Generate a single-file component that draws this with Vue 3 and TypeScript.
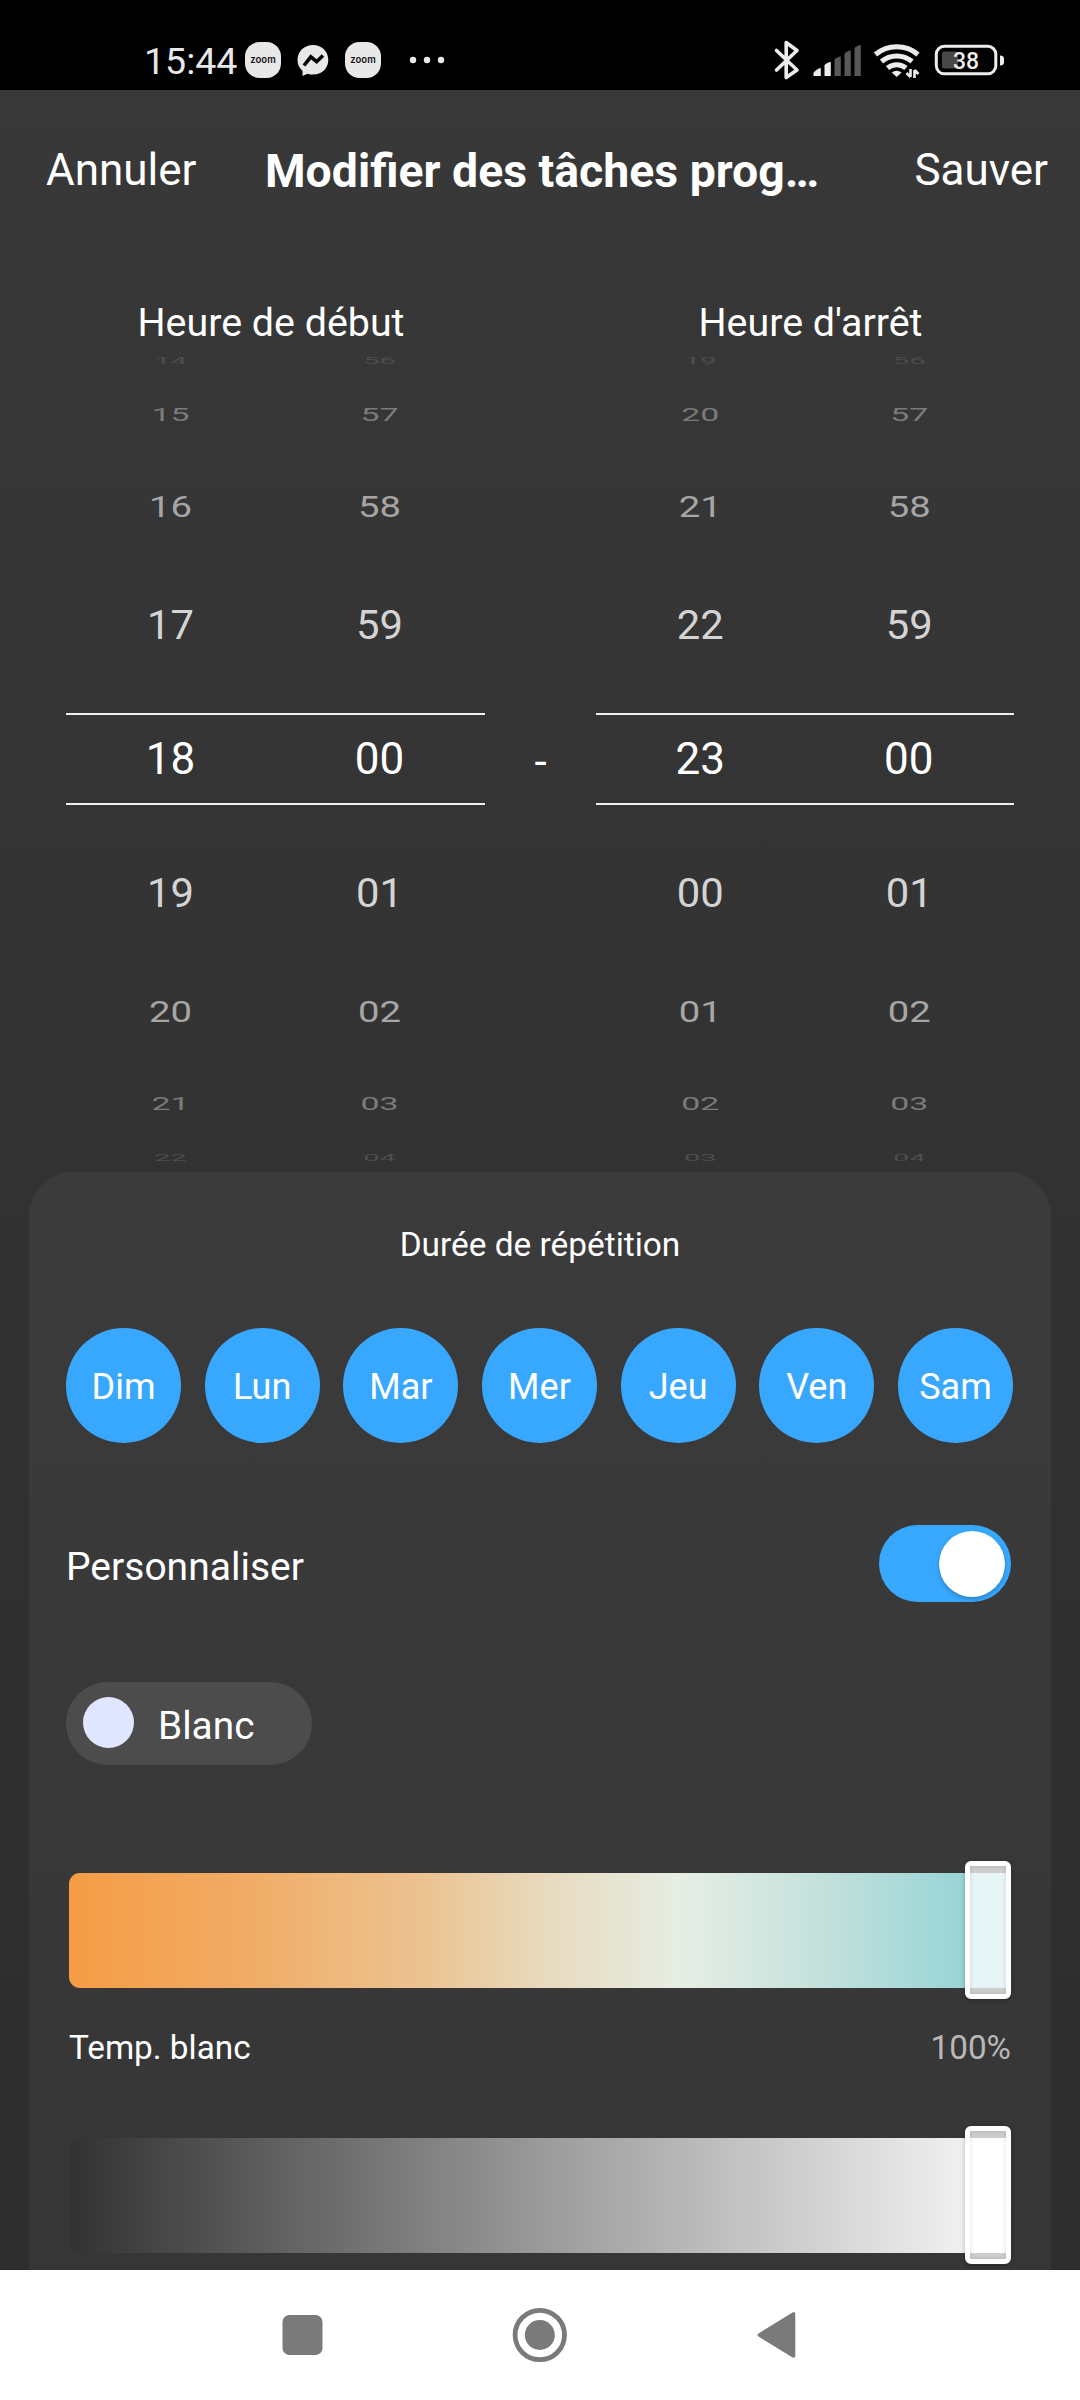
<script setup lang="ts">
interface WheelRow {
  hour: string
  minute: string
  level: number
}

interface Wheel {
  label: string
  rows: WheelRow[]
}

const pad = (n: number): string => String(n).padStart(2, '0')

function buildWheel(label: string, hour: number, minute: number): Wheel {
  const rows = [-4, -3, -2, -1, 0, 1, 2, 3, 4].map((offset) => ({
    hour: pad((hour + offset + 24) % 24),
    minute: pad((minute + offset + 60) % 60),
    level: Math.abs(offset),
  }))
  return { label, rows }
}

const wheels: Wheel[] = [
  buildWheel('Heure de début', 18, 0),
  buildWheel("Heure d'arrêt", 23, 0),
]

const days: string[] = ['Dim', 'Lun', 'Mar', 'Mer', 'Jeu', 'Ven', 'Sam']
</script>

<template>
  <div class="screen">
    <div class="status">
      <span class="clock">15:44</span>
      <svg class="notif" width="210" height="40" viewBox="243 40 210 40">
        <g fill="#e8e8e8">
          <rect x="245" y="42" width="36" height="36" rx="14.5" />
          <rect x="345" y="42" width="36" height="36" rx="14.5" />
          <path d="M313 45c-8.800 0-15.500 6.400-15.500 15 0 4.600 1.700 8 5 10.800v5.300l4.900-2.300c1.800.6 3.600.8 5.600.8 8.800 0 15.300-6.200 15.300-14.600S321.800 45 313 45z" />
          <circle cx="413" cy="60" r="3.200" />
          <circle cx="427" cy="60" r="3.200" />
          <circle cx="441" cy="60" r="3.200" />
        </g>
        <path d="M304 65.500l6.800-8.600 5.800 4.800 6.400-6.200" fill="none" stroke="#000" stroke-width="3.600" />
        <text x="263" y="62.800" class="zoom" textLength="25.500">zoom</text>
        <text x="363" y="62.800" class="zoom" textLength="25.500">zoom</text>
      </svg>
      <svg class="system" width="236" height="44" viewBox="772 38 236 44">
        <path d="M776.500 50.500L797 70l-10.800 7.500v-35L797 50.500 776.500 70" fill="none" stroke="#ececec" stroke-width="3.600" stroke-linejoin="round" stroke-linecap="round" />
        <g fill="#ececec">
          <path d="M813.500 76v-2.500c0-2 5-5.500 7.300-5.500v8z" />
          <path d="M824.500 76V65.500c0-1.500 4.500-3.500 6.300-3.500v14z" />
        </g>
        <g fill="#585858">
          <path d="M834.500 76V60c0-1.500 4.500-3.500 6.300-3.500V76z" />
          <path d="M844.500 76V54c0-1.500 4.500-3.500 6.300-3.500V76z" />
          <path d="M854.500 76V48.500c0-1.500 4.500-3.500 6.300-3.500v31z" />
        </g>
        <g fill="none" stroke="#ececec" stroke-width="5">
          <path d="M875.500 54.500a33 33 0 0 1 42.500 0" />
          <path d="M881.500 61.500a23.500 23.500 0 0 1 30.500 0" />
          <path d="M887.500 68a14.500 14.500 0 0 1 18.500 0" />
        </g>
        <path d="M891.800 72.500a7.500 7.500 0 0 1 9.800 0l-4.900 4.500z" fill="#ececec" />
        <path d="M910.500 69v8M914.500 70v8M910.500 77l-4-4M914.500 70l4 4" stroke="#ececec" stroke-width="2.600" fill="none" />
        <rect x="936.300" y="46.300" width="59.500" height="27.500" rx="8" fill="none" stroke="#ececec" stroke-width="3" />
        <rect x="942" y="51.500" width="16" height="17" rx="2" fill="#484848" />
        <path d="M1000 55.500c2.500 0 4 1 4 3v4c0 2-1.500 3-4 3z" fill="#ececec" />
        <text x="966" y="68.800" class="battery">38</text>
      </svg>
    </div>

    <header class="header">
      <span class="action">Annuler</span>
      <h1 class="title">Modifier des tâches prog…</h1>
      <span class="action save">Sauver</span>
    </header>

    <section class="pickers">
      <template v-for="(wheel, w) in wheels" :key="wheel.label">
        <div v-if="w === 1" class="dash">-</div>
        <div class="picker">
          <div class="picker-label">{{ wheel.label }}</div>
          <div class="wheel">
            <div v-for="(row, i) in wheel.rows" :key="i" class="row" :class="'level-' + row.level">
              <span class="cell">{{ row.hour }}</span>
              <span class="cell">{{ row.minute }}</span>
            </div>
          </div>
        </div>
      </template>
    </section>

    <section class="card">
      <h2 class="repeat">Durée de répétition</h2>
      <div class="days">
        <span v-for="day in days" :key="day" class="day">{{ day }}</span>
      </div>
      <div class="custom">
        <span class="custom-label">Personnaliser</span>
        <span class="toggle"><span class="knob" /></span>
      </div>
      <div class="chip">
        <span class="chip-dot" />
        <span class="chip-text">Blanc</span>
      </div>
      <div class="slider">
        <div class="track warm" />
        <div class="thumb cool-thumb" />
      </div>
      <div class="slider-info">
        <span>Temp. blanc</span>
        <span class="percent">100%</span>
      </div>
      <div class="slider">
        <div class="track bright" />
        <div class="thumb white-thumb" />
      </div>
    </section>

    <nav class="nav">
      <svg width="1080" height="130" viewBox="0 2270 1080 130" fill="#7a7a7a">
        <rect x="282.500" y="2315" width="40" height="40" rx="7" />
        <circle cx="539.800" cy="2335" r="24.700" fill="none" stroke="#7a7a7a" stroke-width="4.800" />
        <circle cx="539.800" cy="2335" r="15" />
        <path d="M759.500 2335L793.500 2314v42z" stroke="#7a7a7a" stroke-width="3.600" stroke-linejoin="round" />
      </svg>
    </nav>
  </div>
</template>

<style>
body {
  margin: 0;
  background: #fff;
}
</style>

<style scoped>
.screen {
  width: 1080px;
  height: 2400px;
  overflow: hidden;
  display: flex;
  flex-direction: column;
  background: linear-gradient(#383838 90px, #333333 1050px, #2d2d2d 2270px);
  font-family: Roboto, "Liberation Sans", sans-serif;
  color: #fff;
}

.status {
  flex: none;
  height: 90px;
  box-sizing: border-box;
  display: flex;
  align-items: flex-start;
  background: #000;
  padding: 0 72px 0 144px;
}
.clock {
  width: 99px;
  margin-top: 41px;
  font-size: 37.5px;
  line-height: 40px;
  color: #e8e8e8;
  white-space: nowrap;
}
.notif {
  margin-top: 40px;
}
.system {
  margin-top: 38px;
  margin-left: auto;
}
.zoom {
  font: 600 9.5px Inter, sans-serif;
  text-anchor: middle;
  fill: #111;
}
.battery {
  font: 500 23px Roboto, sans-serif;
  text-anchor: middle;
  fill: #ececec;
}

.header {
  flex: none;
  height: 160px;
  display: flex;
  align-items: center;
  padding: 0 32px 0 46px;
  font-size: 44px;
}
.action {
  width: 218px;
}
.title {
  width: 552px;
  margin: 0 0 0 1px;
  padding-top: 2px;
  font-size: 46.4px;
  font-weight: 700;
  white-space: nowrap;
  overflow: hidden;
}
.save {
  flex: 1;
  text-align: right;
}

.pickers {
  flex: none;
  height: 922px;
  box-sizing: border-box;
  padding: 54px 66px 0;
  display: flex;
}
.picker {
  width: 419px;
}
.picker:last-child {
  width: 418px;
}
.picker-label {
  height: 37px;
  line-height: 37px;
  font-size: 39.4px;
  text-align: center;
  margin-right: 9px;
}
.picker:last-child .picker-label {
  width: 429px;
}
.wheel {
  height: 819px;
  font-size: 44px;
}
.row {
  display: flex;
  align-items: center;
  box-sizing: border-box;
  padding-right: 1px;
}
.cell {
  width: 50%;
  text-align: center;
  line-height: 50px;
  margin-block: -10px;
}
.level-0 {
  height: 92px;
  margin: 27px 0;
  border-top: 2px solid #eef0f0;
  border-bottom: 2px solid #eef0f0;
}
.level-1 {
  height: 122px;
  color: #d4d4d4;
}
.level-1 .cell {
  transform: scale(0.95, 0.91);
}
.level-2 {
  height: 115px;
  color: #a6a6a6;
}
.level-2 .cell {
  transform: scale(0.87, 0.69);
}
.level-3 {
  height: 69px;
  color: #7b7b7b;
}
.level-3 .cell {
  transform: scale(0.77, 0.42);
}
.level-4 {
  height: 39px;
  color: #4e4e4e;
}
.level-4 .cell {
  transform: scale(0.66, 0.2);
}
.dash {
  flex: 1;
  text-align: center;
  font-size: 44px;
  line-height: 50px;
  padding-top: 433px;
}

.card {
  flex: none;
  height: 1098px;
  box-sizing: border-box;
  margin: 0 29px;
  padding: 53px 37px 0;
  border-radius: 44px 44px 0 0;
  background: linear-gradient(#3b3b3b, #363636);
  overflow: hidden;
}
.repeat {
  margin: 0;
  font-size: 33.4px;
  font-weight: 400;
  line-height: 40px;
  text-align: center;
}
.days {
  display: flex;
  justify-content: space-between;
  margin-top: 63px;
  padding-right: 1px;
}
.day {
  width: 115px;
  height: 115px;
  box-sizing: border-box;
  padding-top: 3px;
  border-radius: 50%;
  background: #38a8ff;
  font-size: 36px;
  line-height: 113px;
  text-align: center;
}
.custom {
  display: flex;
  justify-content: space-between;
  margin-top: 82px;
  height: 77px;
  padding-right: 3px;
}
.custom-label {
  font-size: 39px;
  line-height: 85px;
}
.toggle {
  display: flex;
  justify-content: flex-end;
  align-items: center;
  width: 132px;
  height: 77px;
  box-sizing: border-box;
  padding-right: 6px;
  border-radius: 39px;
  background: #38a8ff;
}
.knob {
  width: 66px;
  height: 66px;
  border-radius: 50%;
  background: #fff;
  box-shadow: 0 2px 4px rgba(0, 0, 0, 0.25);
}
.chip {
  display: flex;
  align-items: center;
  width: 246px;
  height: 83px;
  box-sizing: border-box;
  margin-top: 80px;
  padding-left: 17px;
  border-radius: 42px;
  background: #4c4c4c;
}
.chip-dot {
  width: 51px;
  height: 51px;
  margin-bottom: 2px;
  border-radius: 50%;
  background: #e0e6ff;
}
.chip-text {
  margin-left: 24px;
  padding-top: 4px;
  font-size: 38.8px;
  line-height: 46px;
}
.slider {
  position: relative;
  display: flex;
  align-items: center;
  height: 138px;
  margin: 96px 3px 0 3px;
}
.track {
  flex: 1;
  height: 115px;
  border-radius: 11px;
}
.warm {
  background: linear-gradient(90deg, #f59c44, #f1ab64 18%, #ecc392 38%, #e8d9bc 50%, #e6eee4 65%, #c3e1dc 80%, #96d4d6 96%);
}
.bright {
  background: linear-gradient(90deg, #323232, #9a9a9a 50%, #f2f2f2 96%, #fff);
}
.thumb {
  position: absolute;
  top: 0;
  right: 0;
  width: 46px;
  height: 138px;
  box-sizing: border-box;
  border: 5px solid #fff;
  border-radius: 6px;
  box-shadow: 0 2px 5px rgba(0, 0, 0, 0.25);
}
.cool-thumb {
  background: linear-gradient(#cdcdcd 7px, #e8f5f6 7px, #e8f5f6 122px, #cdcdcd 122px);
}
.white-thumb {
  background: linear-gradient(#cdcdcd 7px, #fff 7px, #fff 122px, #cdcdcd 122px);
}
.thumb::after {
  content: "";
  display: block;
  height: 128px;
  box-shadow: inset 0 0 4px rgba(0, 0, 0, 0.14);
}
.slider-info {
  display: flex;
  justify-content: space-between;
  height: 40px;
  margin: 29px 3px 0 3px;
  font-size: 33.3px;
  line-height: 40px;
}
.percent {
  color: #b8b8b8;
}
.slider-info + .slider {
  margin-top: 58px;
}

.nav {
  flex: none;
  height: 130px;
  background: #fff;
}
.nav svg {
  display: block;
}
</style>
